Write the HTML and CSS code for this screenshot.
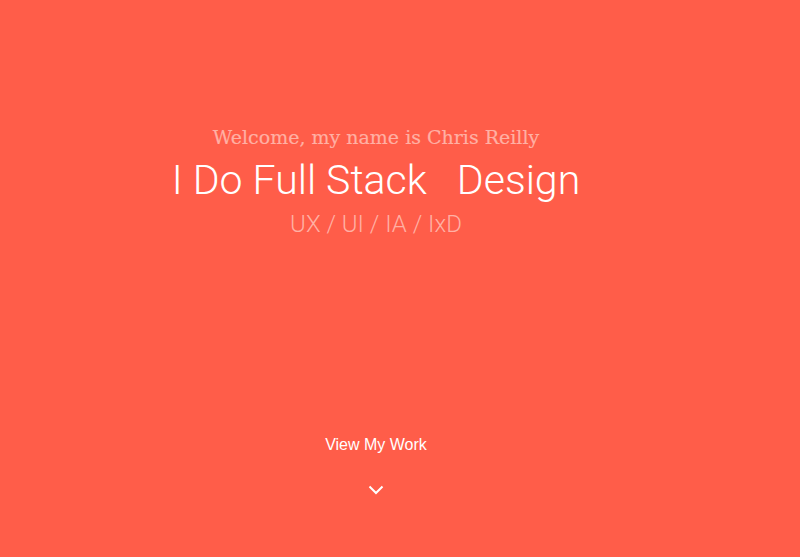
FILE: index.html
```html
<!DOCTYPE html>
<html>
<head>
<meta charset="utf-8">
<link rel="stylesheet" href="styles.css">
</head>
<body>
<main class="hero">
  <div class="intro">
    <p class="welcome">Welcome, my name is Chris Reilly</p>
    <h1 class="title">I Do Full Stack &nbsp; Design</h1>
    <p class="roles">UX / UI / IA / IxD</p>
  </div>
  <a class="work" href="#">
    <span class="work-label">View My Work</span>
    <svg class="chevron" width="16" height="10" viewBox="0 0 16 10"><path d="M1.5 1.5 L8 8 L14.5 1.5" fill="none" stroke="#fff" stroke-width="2"/></svg>
  </a>
</main>
</body>
</html>
```
FILE: styles.css
```css
html, body {
  margin: 0;
  padding: 0;
  background: #ff5d49;
  height: 100%;
}
.hero {
  width: 752px;
  height: 557px;
  display: flex;
  flex-direction: column;
  align-items: center;
  font-family: "Liberation Sans", Arial, sans-serif;
}
.intro {
  display: flex;
  flex-direction: column;
  align-items: center;
  padding-top: 123px;
}
.welcome {
  margin: 0;
  font-family: "DejaVu Serif", serif;
  font-size: 19px;
  color: #ffb0a4;
  line-height: 28px;
  -webkit-text-stroke: 0.2px #ffb0a4;
}
.title {
  margin: 0;
  font-family: Roboto, sans-serif;
  font-weight: 300;
  font-size: 41px;
  color: #fff;
  line-height: 58px;
}
.roles {
  margin: 0;
  font-family: Roboto, sans-serif;
  font-weight: 300;
  font-size: 24px;
  color: #ffb0a4;
  line-height: 30px;
}
.work {
  margin-top: 196px;
  display: flex;
  flex-direction: column;
  align-items: center;
  text-decoration: none;
  color: #fff;
}
.work-label {
  font-size: 16px;
  line-height: 20px;
}
.chevron {
  margin-top: 30px;
}
```
